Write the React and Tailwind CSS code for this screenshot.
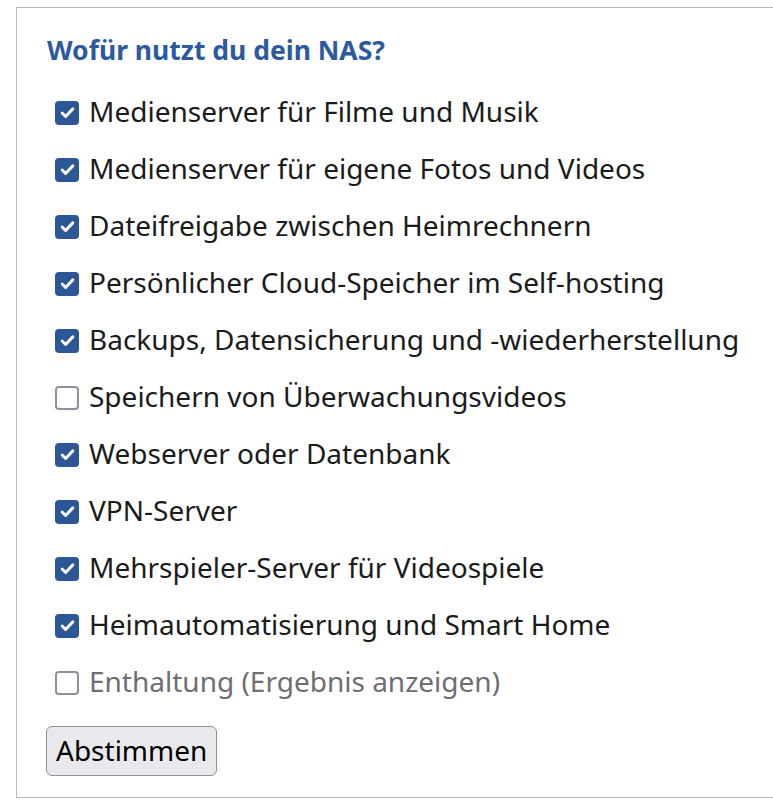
const options = [
  { label: 'Medienserver für Filme und Musik', checked: true },
  { label: 'Medienserver für eigene Fotos und Videos', checked: true },
  { label: 'Dateifreigabe zwischen Heimrechnern', checked: true },
  { label: 'Persönlicher Cloud-Speicher im Self-hosting', checked: true },
  { label: 'Backups, Datensicherung und -wiederherstellung', checked: true },
  { label: 'Speichern von Überwachungsvideos', checked: false },
  { label: 'Webserver oder Datenbank', checked: true },
  { label: 'VPN-Server', checked: true },
  { label: 'Mehrspieler-Server für Videospiele', checked: true },
  { label: 'Heimautomatisierung und Smart Home', checked: true },
  { label: 'Enthaltung (Ergebnis anzeigen)', checked: false, muted: true },
];

function Box({ checked }) {
  if (checked) {
    return (
      <span className="w-[24px] h-[24px] rounded-[4px] bg-[#2b5797] flex items-center justify-center shrink-0">
        <svg width="17" height="17" viewBox="0 0 16 16" fill="none">
          <path d="M3 8.5l3.2 3.2L13 4.6" stroke="white" strokeWidth="2.8" strokeLinecap="round" strokeLinejoin="round" />
        </svg>
      </span>
    );
  }
  return <span className="w-[24px] h-[24px] rounded-[4px] border-2 border-[#8f8f9d] bg-white shrink-0" />;
}

export default function App() {
  return (
    <div className="bg-white min-h-[802px] pt-[7px] pl-[16px]" style={{ fontFamily: '"Noto Sans", sans-serif' }}>
      <div className="border border-r-0 border-[#bbbbbb] pl-[30px] pt-[27px] pb-[21px]">
        <h2 className="text-[26.5px] leading-[30px] font-bold text-[#2c5a9e]">Wofür nutzt du dein NAS?</h2>
        <ul className="mt-[19px]">
          {options.map(({ label, checked, muted }) => (
            <li key={label} className="h-[57px] flex items-center pl-[8px] gap-[10px]">
              <Box checked={checked} />
              <span className={`text-[28px] pb-[3px] ${muted ? 'text-[#6e6e73]' : 'text-[#1b1b1b]'}`}>{label}</span>
            </li>
          ))}
        </ul>
        <button className="-ml-px mt-[15px] h-[50px] px-[9px] pb-[2px] bg-[#e9e9ed] border border-[#8f8f9d] rounded-[6px] text-[28px] leading-none text-black">
          Abstimmen
        </button>
      </div>
    </div>
  );
}
